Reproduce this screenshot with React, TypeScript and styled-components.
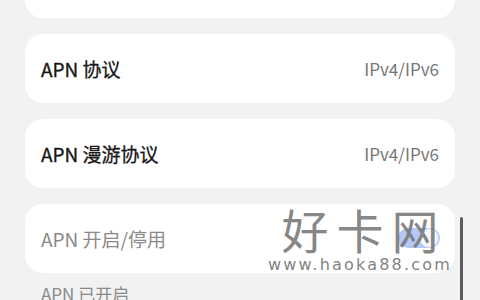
import React from "react";
import styled, { createGlobalStyle } from "styled-components";

const GlobalStyle = createGlobalStyle`
  html, body {
    margin: 0;
    padding: 0;
    background: #f1f2f4;
    overflow: hidden;
  }
  body {
    font-family: "Noto Sans CJK SC", "Noto Sans", sans-serif;
  }
`;

const Screen = styled.div`
  position: relative;
  width: 480px;
  height: 300px;
  overflow: hidden;
  background: #f1f2f4;
`;

const List = styled.div`
  display: flex;
  flex-direction: column;
  gap: 16px;
  padding: 0 25px;
  margin-top: -51px;
`;

const Card = styled.div`
  height: 69px;
  background: #ffffff;
  border-radius: 18px;
  display: flex;
  align-items: center;
  justify-content: space-between;
  padding: 0 16px;
  box-sizing: border-box;
`;

const Title = styled.span<{ $muted?: boolean }>`
  font-size: 19px;
  font-weight: 400;
  color: ${(p) => (p.$muted ? "#8a8a8a" : "#161616")};
  -webkit-text-stroke: ${(p) => (p.$muted ? "0" : "0.3px")};
`;

const Value = styled.span`
  font-size: 17px;
  color: #777777;
`;

const Toggle = styled.div`
  position: relative;
  width: 42px;
  height: 20px;
  border-radius: 10px;
  background: #b3c8f4;
  margin-right: -1px;
  margin-top: -2px;
`;

const Knob = styled.div`
  position: absolute;
  right: 1px;
  top: 0px;
  width: 18px;
  height: 18px;
  border-radius: 50%;
  background: #f4f7fd;
  border: 1px solid #c4d3f2;
`;

const Caption = styled.div`
  padding: 8px 41px 0;
  font-size: 17px;
  color: #8a8a8a;
`;

const Scrollbar = styled.div`
  position: absolute;
  left: 460px;
  top: 217px;
  width: 3px;
  height: 90px;
  border-radius: 2px;
  background: #5a5a5a;
`;

const Watermark = styled.div`
  position: absolute;
  left: 262px;
  top: 202px;
  width: 196px;
  display: flex;
  flex-direction: column;
  align-items: center;
  color: rgba(118, 118, 118, 0.9);
  pointer-events: none;
`;

const MarkTitle = styled.div`
  font-family: "Noto Sans CJK SC", sans-serif;
  font-size: 47px;
  font-weight: 400;
  line-height: 54px;
  letter-spacing: 8px;
  margin-right: -8px;
`;

const MarkUrl = styled.div`
  font-family: "DejaVu Sans", sans-serif;
  font-size: 16px;
  line-height: 18px;
  letter-spacing: 2.2px;
  color: rgba(105, 105, 105, 0.85);
`;

export default function App() {
  return (
    <Screen>
      <GlobalStyle />
      <List>
        <Card />
        <Card>
          <Title>APN 协议</Title>
          <Value>IPv4/IPv6</Value>
        </Card>
        <Card>
          <Title>APN 漫游协议</Title>
          <Value>IPv4/IPv6</Value>
        </Card>
        <Card>
          <Title $muted>APN 开启/停用</Title>
          <Toggle>
            <Knob />
          </Toggle>
        </Card>
      </List>
      <Caption>APN 已开启</Caption>
      <Scrollbar />
      <Watermark>
        <MarkTitle>好卡网</MarkTitle>
        <MarkUrl>www.haoka88.com</MarkUrl>
      </Watermark>
    </Screen>
  );
}
